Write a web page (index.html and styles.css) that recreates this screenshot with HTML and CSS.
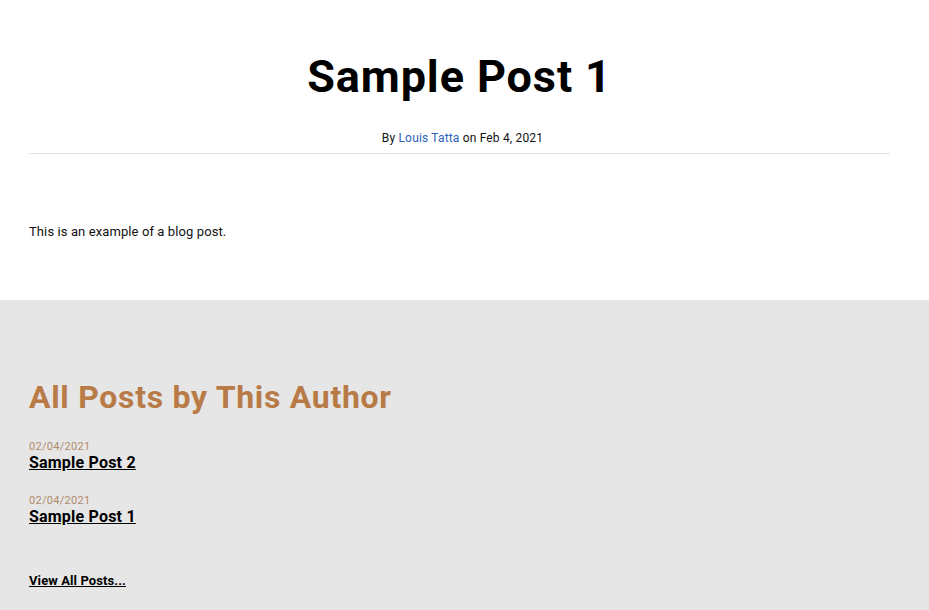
FILE: index.html
```html
<!DOCTYPE html>
<html>
<head>
<meta charset="utf-8">
<link rel="stylesheet" href="styles.css">
</head>
<body>
<main class="post">
  <header class="post-header">
    <h1 class="post-title">Sample Post 1</h1>
    <p class="post-meta">By <a class="author" href="#">Louis Tatta</a> on Feb 4, 2021</p>
  </header>
  <div class="post-body">
    <p>This is an example of a blog post.</p>
  </div>
</main>
<section class="author-posts">
  <h2 class="author-title">All Posts by This Author</h2>
  <ul class="post-list">
    <li class="post-item">
      <div class="post-date">02/04/2021</div>
      <a class="post-link" href="#">Sample Post 2</a>
    </li>
    <li class="post-item">
      <div class="post-date">02/04/2021</div>
      <a class="post-link" href="#">Sample Post 1</a>
    </li>
  </ul>
  <a class="view-all" href="#">View All Posts...</a>
</section>
</body>
</html>
```
FILE: styles.css
```css
html, body {
  margin: 0;
  padding: 0;
}
body {
  font-family: Roboto, "Liberation Sans", sans-serif;
  color: #000;
  background: #fff;
}
.post {
  padding: 0 39px 0 29px;
}
.post-header {
  border-bottom: 1px solid #e3e3e3;
  text-align: center;
  padding-top: 51px;
}
.post-title {
  margin: 0;
  font-size: 45px;
  font-weight: 700;
  line-height: 52px;
  letter-spacing: 0.9px;
}
.post-meta {
  margin: 28px 0 0;
  padding: 0 0 8px 6px;
  font-size: 12px;
  line-height: 14px;
  color: #111;
  letter-spacing: 0.17px;
}
.author {
  color: #2e62b8;
  text-decoration: none;
}
.post-body {
  padding: 70px 0 60px;
}
.post-body p {
  margin: 0;
  font-size: 13px;
  line-height: 16px;
  color: #111;
  letter-spacing: 0.1px;
}
.author-posts {
  background: #e6e6e6;
  padding: 79px 29px 20px;
  min-height: 300px;
}
.author-title {
  margin: 0;
  font-size: 32px;
  font-weight: 700;
  line-height: 36px;
  color: #b87b47;
  letter-spacing: 0.7px;
}
.post-list {
  list-style: none;
  margin: 25px 0 0;
  padding: 0;
  display: flex;
  flex-direction: column;
  gap: 21px;
}
.post-date {
  font-size: 11px;
  line-height: 13px;
  color: #b08a6c;
  letter-spacing: 0.3px;
}
.post-link {
  font-size: 16px;
  font-weight: 700;
  line-height: 20px;
  color: #000;
  letter-spacing: 0.2px;
}
.view-all {
  display: inline-block;
  margin-top: 46px;
  font-size: 13px;
  font-weight: 700;
  color: #000;
  letter-spacing: 0.1px;
}
```
